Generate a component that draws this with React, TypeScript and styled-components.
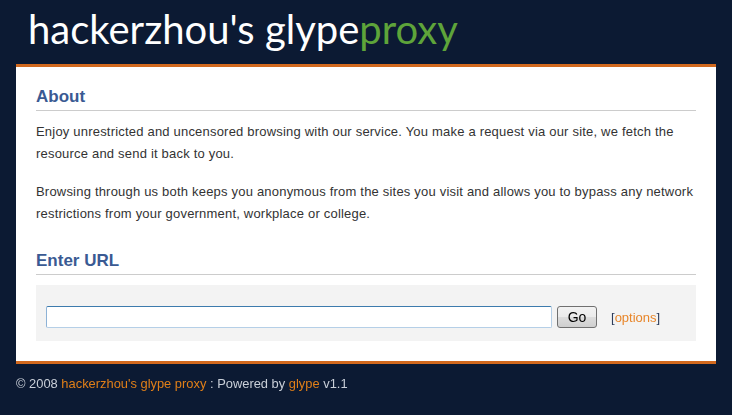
import React from "react";
import styled, { createGlobalStyle } from "styled-components";

const Global = createGlobalStyle`
  html, body {
    margin: 0;
    padding: 0;
    background: #0c1a33;
  }
  body {
    font-family: "Liberation Sans", Arial, sans-serif;
    min-height: 415px;
  }
`;

const Page = styled.div`
  display: flex;
  flex-direction: column;
  padding: 0 16px;
`;

const Header = styled.header`
  height: 64px;
  display: flex;
  align-items: flex-start;
  padding-left: 12px;
`;

const Title = styled.h1`
  margin: 0;
  font-family: "Lato", "Open Sans", sans-serif;
  font-weight: 400;
  font-size: 40px;
  line-height: 58px;
  color: #ffffff;
`;

const Accent = styled.span`
  color: #5ea43a;
`;

const Card = styled.main`
  background: #ffffff;
  border-top: 3px solid #d2691e;
  border-bottom: 3px solid #d2691e;
  padding: 20px 20px 20px;
`;

const Heading = styled.h2<{ $top?: number }>`
  margin: ${(p) => p.$top ?? 0}px 0 0;
  padding-bottom: 3px;
  border-bottom: 1px solid #cccccc;
  font-family: "Liberation Sans", Arial, sans-serif;
  font-size: 17px;
  line-height: 20px;
  font-weight: 700;
  color: #3a5a93;
`;

const Para = styled.p<{ $top: number }>`
  margin: ${(p) => p.$top}px 0 0;
  font-size: 13px;
  letter-spacing: 0.2px;
  line-height: 22px;
  color: #333333;
`;

const FormBox = styled.form`
  margin-top: 10px;
  background: #f3f3f3;
  padding: 21px 10px 13px;
  display: flex;
  align-items: center;
`;

const UrlInput = styled.input`
  box-sizing: border-box;
  width: 506px;
  height: 22px;
  margin: 0;
  padding: 1px 3px;
  border: 1px solid #3d7bad;
  border-right-color: #b5cfe7;
  border-bottom-color: #b5cfe7;
  border-left-color: #8db2d6;
  border-radius: 2px;
  background: #fff;
  outline: none;
  font-size: 13px;
  font-family: "Liberation Sans", Arial, sans-serif;
`;

const GoButton = styled.button`
  box-sizing: border-box;
  margin-left: 5px;
  width: 40px;
  height: 22px;
  padding: 0;
  border: 1px solid #707070;
  border-radius: 3px;
  background: linear-gradient(#f2f2f2 0%, #ebebeb 50%, #dddddd 50%, #cfcfcf 100%);
  font-family: "Liberation Sans", Arial, sans-serif;
  font-size: 14px;
  color: #000;
`;

const Options = styled.span`
  margin-left: 14px;
  font-size: 13px;
  color: #2e3c5a;
`;

const OrangeLink = styled.a`
  color: #e8862a;
  text-decoration: none;
`;

const Footer = styled.footer`
  padding-top: 12px;
  font-size: 12.9px;
  line-height: 16px;
  color: #c9cfd8;
`;

const FootLink = styled.a`
  color: #e07f18;
  text-decoration: none;
`;

export default function App() {
  return (
    <>
      <Global />
      <Page>
        <Header>
          <Title>
            hackerzhou's glype<Accent>proxy</Accent>
          </Title>
        </Header>
        <Card>
          <Heading>About</Heading>
          <Para $top={10}>
            Enjoy unrestricted and uncensored browsing with our service. You make a request via our site, we fetch the
            resource and send it back to you.
          </Para>
          <Para $top={16}>
            Browsing through us both keeps you anonymous from the sites you visit and allows you to bypass any network
            restrictions from your government, workplace or college.
          </Para>
          <Heading $top={26}>Enter URL</Heading>
          <FormBox onSubmit={(e) => e.preventDefault()}>
            <UrlInput type="text" autoFocus />
            <GoButton type="submit">Go</GoButton>
            <Options>
              [<OrangeLink href="#">options</OrangeLink>]
            </Options>
          </FormBox>
        </Card>
        <Footer>
          © 2008 <FootLink href="#">hackerzhou's glype proxy</FootLink> : Powered by{" "}
          <FootLink href="#">glype</FootLink> v1.1
        </Footer>
      </Page>
    </>
  );
}
